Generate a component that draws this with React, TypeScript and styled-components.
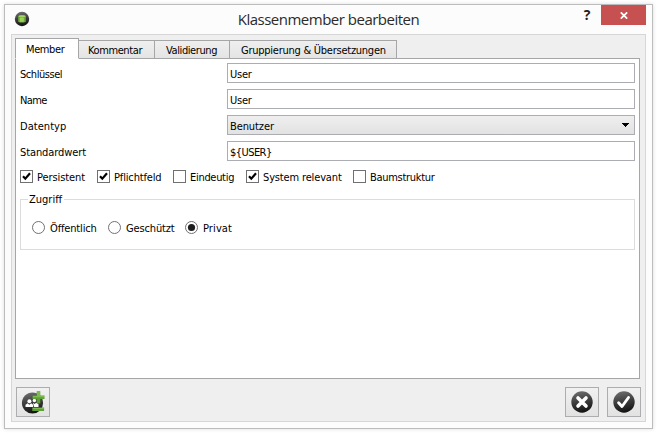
import React from "react";
import styled, { createGlobalStyle } from "styled-components";

const Global = createGlobalStyle`
  * { box-sizing: border-box; }
  body {
    margin: 0;
    background: #ffffff;
    overflow: hidden;
    font: 11px/14px "DejaVu Sans Condensed", "DejaVu Sans", sans-serif;
    font-stretch: condensed;
    color: #000000;
  }
  button { font: inherit; color: inherit; }
`;

const Text = styled.span<{ $ls?: number }>`
  display: block;
  letter-spacing: ${(p) => p.$ls ?? -0.25}px;
  white-space: nowrap;
`;

const Dialog = styled.main`
  width: 649px;
  height: 425px;
  margin: 4px;
  border: 1px solid #bcbcbc;
  background: #fcfcfc;
  box-shadow: 0 0 4px rgba(0, 0, 0, 0.14);
  display: flex;
  flex-direction: column;
`;

const TitleBar = styled.header`
  height: 29px;
  flex: none;
  display: grid;
  grid-template-columns: 90px 1fr 90px;
  padding: 0 6px 0 9px;
`;

const AppIcon = styled.svg`
  width: 16px;
  height: 16px;
  margin-top: 6px;
`;

const Title = styled.h1`
  margin: 3px 0 0;
  padding-right: 3px;
  font: 400 15px/22px "Open Sans", "Noto Sans", sans-serif;
  font-stretch: normal;
  letter-spacing: -0.5px;
  text-align: center;
  color: #2b2b2b;
`;

const WindowButtons = styled.div`
  display: flex;
  justify-content: flex-end;
  align-items: flex-start;
`;

const HelpButton = styled.button`
  width: 28px;
  height: 20px;
  padding: 0;
  border: 0;
  background: none;
  display: grid;
  place-items: center;
  font: 700 14px/20px "Open Sans", sans-serif;
  color: #1e1e1e;
`;

const CloseButton = styled.button`
  width: 45px;
  height: 20px;
  padding: 1px 0 0 1px;
  border: 0;
  background: #c75050;
  display: grid;
  place-items: center;
`;

const Client = styled.section`
  flex: 1;
  margin: 0 6px 6px;
  padding: 3px 5px 4px 3px;
  border: 1px solid #d6d6d6;
  background: #efefef;
  display: flex;
  flex-direction: column;
`;

const Tabs = styled.nav`
  display: flex;
  align-items: flex-end;
  height: 21px;
  margin-bottom: -1px;
  flex: none;
`;

const Tab = styled.button<{ $active?: boolean; $width: number; $pad: number }>`
  position: relative;
  width: ${(p) => p.$width}px;
  height: ${(p) => (p.$active ? 21 : 19)}px;
  padding: ${(p) => (p.$active ? 2 : 3)}px 0 0 ${(p) => p.$pad}px;
  border: 1px solid #a5a6a8;
  border-left-width: ${(p) => (p.$active ? 1 : 0)}px;
  border-bottom-color: ${(p) => (p.$active ? "#ffffff" : "#a5a6a8")};
  background: ${(p) => (p.$active ? "#ffffff" : "linear-gradient(#efefef, #e4e4e4)")};
  text-align: left;
  display: flex;
  align-items: center;
`;

const TabPage = styled.div`
  height: 321px;
  flex: none;
  border: 1px solid #a5a6a8;
  background: #ffffff;
  padding: 4px 4px 0;
`;

const Field = styled.label`
  display: grid;
  grid-template-columns: 207px 1fr;
  align-items: center;
  height: 20px;
  margin-bottom: 6px;
`;

const FieldName = styled(Text)`
  padding-top: 3px;
`;

const Box = styled.div<{ $combo?: boolean }>`
  height: 20px;
  border: 1px solid #abadb3;
  background: ${(p) => (p.$combo ? "linear-gradient(#efefef, #e2e2e2)" : "#ffffff")};
  padding: 3px 5px 0 2px;
  display: flex;
  align-items: center;
  justify-content: space-between;
`;

const Arrow = styled.svg`
  width: 7px;
  height: 4px;
  margin-top: -3px;
`;

const Checks = styled.div`
  display: flex;
  height: 13px;
  margin-top: 9px;
`;

const Option = styled.div<{ $width: number; $gap?: number }>`
  width: ${(p) => p.$width}px;
  height: 13px;
  display: flex;
  align-items: flex-start;
  gap: ${(p) => p.$gap ?? 4}px;
`;

const OptionText = styled(Text)`
  line-height: 15px;
`;

const Mark = styled.svg`
  width: 13px;
  height: 13px;
  flex: none;
`;

const Group = styled.fieldset`
  margin: 9px 0 0;
  padding: 0 0 0 11px;
  height: 58px;
  border: 1px solid #dcdcdc;
  width: 615px;
`;

const Legend = styled.legend`
  margin-left: -4px;
  padding: 1px 2px 0 1px;
  height: 14px;
`;

const Radios = styled.div`
  display: flex;
  margin-top: 15px;
  height: 13px;
`;

const Footer = styled.footer`
  margin: 8px -1px 0 1px;
  display: flex;
  gap: 8px;
`;

const ToolButton = styled.button<{ $push?: boolean }>`
  width: 34px;
  height: 30px;
  padding: 0 0 1px;
  margin-left: ${(p) => (p.$push ? "auto" : "0")};
  border: 1px solid #adadb0;
  background: linear-gradient(#f1f1f1, #e2e2e2);
  display: grid;
  place-items: center;
`;

const BallGradient = ({ id }: { id: string }) => (
  <defs>
    <linearGradient id={id} x1="0.4" y1="0" x2="0.6" y2="1">
      <stop offset="0" stopColor="#6c6c6c" />
      <stop offset="0.5" stopColor="#3a3a3a" />
      <stop offset="1" stopColor="#101010" />
    </linearGradient>
  </defs>
);

const Check = ({ on }: { on?: boolean }) => (
  <Mark viewBox="0 0 13 13">
    <rect x=".5" y=".5" width="12" height="12" fill="#fff" stroke="#707070" />
    {on && <path d="M3 6.3 5.3 8.7 10 3.3" fill="none" stroke="#000" strokeWidth="2.2" />}
  </Mark>
);

const Radio = ({ on }: { on?: boolean }) => (
  <Mark viewBox="0 0 13 13">
    <circle cx="6.5" cy="6.5" r="6" fill="#fff" stroke="#707070" />
    {on && <circle cx="6.5" cy="6.5" r="3.6" fill="#1e1e1e" />}
  </Mark>
);

const tabs = [
  { label: "Member", width: 64, pad: 10, active: true, ls: -0.4 },
  { label: "Kommentar", width: 76, pad: 9, ls: -0.4 },
  { label: "Validierung", width: 75, pad: 11, ls: -0.4 },
  { label: "Gruppierung & Übersetzungen", width: 167, pad: 11, ls: -0.25 },
];

const fields = [
  { label: "Schlüssel", value: "User", ls: -0.45 },
  { label: "Name", value: "User", ls: -0.6 },
  { label: "Datentyp", value: "Benutzer", combo: true, ls: 0.05, valueLs: -0.1 },
  { label: "Standardwert", value: "${USER}", ls: -0.1, valueLs: -0.55 },
];

const checks = [
  { label: "Persistent", on: true, width: 77, ls: -0.1 },
  { label: "Pflichtfeld", on: true, width: 76, ls: -0.15 },
  { label: "Eindeutig", on: false, width: 73, ls: -0.3 },
  { label: "System relevant", on: true, width: 107, ls: -0.15 },
  { label: "Baumstruktur", on: false, width: 90, ls: -0.3 },
];

const radios = [
  { label: "Öffentlich", on: false, width: 76, ls: -0.15 },
  { label: "Geschützt", on: false, width: 77, ls: -0.15 },
  { label: "Privat", on: true, width: 60, ls: 0.1 },
];

export default function App() {
  return (
    <>
      <Global />
      <Dialog>
        <TitleBar>
          <AppIcon viewBox="0 0 16 16">
            <BallGradient id="app" />
            <circle cx="8" cy="8" r="7.2" fill="url(#app)" />
            <path d="M4.2 5Q8 3.2 11.8 5V10.7Q8 12.5 4.2 10.7Z" fill="#6fa83c" />
            <ellipse cx="8" cy="5.3" rx="3.4" ry="1" fill="#a5d467" />
            <path d="M5.8 6.7h4v4.1h-4Z" fill="#9ad653" />
          </AppIcon>
          <Title>Klassenmember bearbeiten</Title>
          <WindowButtons>
            <HelpButton>?</HelpButton>
            <CloseButton>
              <svg width="8" height="7" viewBox="0 0 8 7">
                <path d="M.8.3 7.2 6.7M7.2.3.8 6.7" stroke="#fff" strokeWidth="1.7" />
              </svg>
            </CloseButton>
          </WindowButtons>
        </TitleBar>
        <Client>
          <Tabs>
            {tabs.map((t) => (
              <Tab key={t.label} $active={t.active} $width={t.width} $pad={t.pad}>
                <Text $ls={t.ls}>{t.label}</Text>
              </Tab>
            ))}
          </Tabs>
          <TabPage>
            {fields.map((f) => (
              <Field key={f.label}>
                <FieldName $ls={f.ls}>{f.label}</FieldName>
                <Box $combo={f.combo}>
                  <Text $ls={f.valueLs}>{f.value}</Text>
                  {f.combo && (
                    <Arrow viewBox="0 0 7 4" shapeRendering="crispEdges">
                      <path d="M0 0h7v1H6v1H5v1H4v1H3V3H2V2H1V1H0Z" fill="#000" />
                    </Arrow>
                  )}
                </Box>
              </Field>
            ))}
            <Checks>
              {checks.map((c) => (
                <Option key={c.label} $width={c.width}>
                  <Check on={c.on} />
                  <OptionText $ls={c.ls}>{c.label}</OptionText>
                </Option>
              ))}
            </Checks>
            <Group>
              <Legend>
                <Text $ls={0}>Zugriff</Text>
              </Legend>
              <Radios>
                {radios.map((r) => (
                  <Option key={r.label} $width={r.width} $gap={5}>
                    <Radio on={r.on} />
                    <OptionText $ls={r.ls}>{r.label}</OptionText>
                  </Option>
                ))}
              </Radios>
            </Group>
          </TabPage>
          <Footer>
            <ToolButton>
              <svg width="24" height="24" viewBox="0 0 24 24">
                <BallGradient id="users" />
                <circle cx="11.5" cy="13" r="10.6" fill="url(#users)" />
                <g fill="#fff">
                  <circle cx="8.4" cy="11.2" r="2" />
                  <path d="M4.5 17v-2.2l2.2-1.6 1.7 1.5 1.7-1.5 2 1.6V17Z" />
                  <circle cx="13.4" cy="10.5" r="1.7" />
                  <path d="M11.9 12.8 13.4 14l2-1.2 2.1 1.5V17h-4.4Z" />
                </g>
                <path d="M15.7 1.3h3.6v4.2h4.2v3.4h-4.2v4.6h-3.6V8.9h-4.2V5.500h4.200ZM11.300 17.600h11.800v3.400H11.300Z" fill="#5fa036" />
                <path d="M16 1.800h3v4.200h4v1.200H12V6h4ZM11.800 18h10.800v1H11.800Z" fill="#7dbb50" />
              </svg>
            </ToolButton>
            <ToolButton $push>
              <svg width="22" height="22" viewBox="0 0 22 22">
                <BallGradient id="cancel" />
                <circle cx="11" cy="11" r="10.7" fill="url(#cancel)" />
                <path d="m7 7 8 8m0-8-8 8" stroke="#fff" strokeWidth="3.6" strokeLinecap="round" />
              </svg>
            </ToolButton>
            <ToolButton>
              <svg width="22" height="22" viewBox="0 0 22 22">
                <BallGradient id="ok" />
                <circle cx="11" cy="11" r="10.7" fill="url(#ok)" />
                <path d="m5.6 11.800 3.400 3.700L15.500 6.500" fill="none" stroke="#fff" strokeWidth="2.9" strokeLinecap="round" strokeLinejoin="round" />
              </svg>
            </ToolButton>
          </Footer>
        </Client>
      </Dialog>
    </>
  );
}
